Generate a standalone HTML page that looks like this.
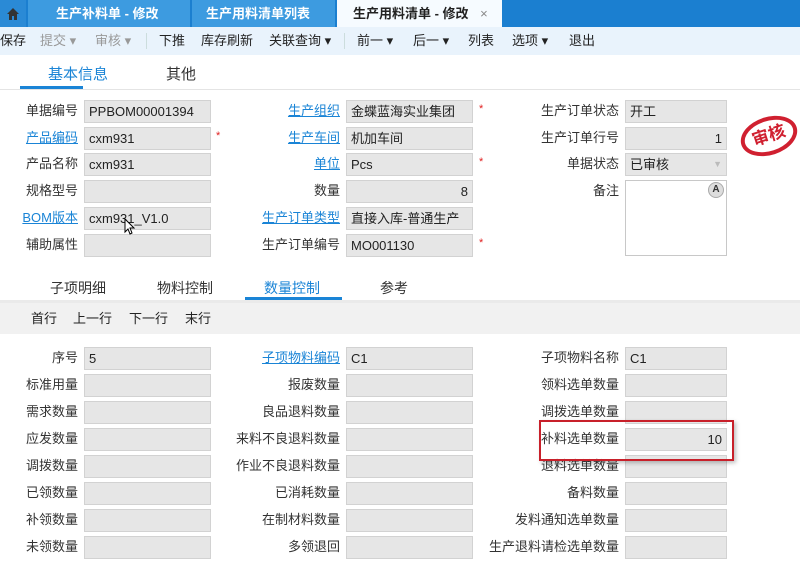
<!DOCTYPE html>
<html><head><meta charset="utf-8"><style>
*{margin:0;padding:0;box-sizing:border-box}
body{width:800px;height:566px;overflow:hidden;background:#fff;font-family:"Liberation Sans","Noto Sans CJK SC",sans-serif;font-size:13px;color:#333;position:relative}
.a{position:absolute}
.tabbar{left:0;top:0;width:800px;height:27px;background:#1b7fd0}
.tab{top:0;height:27px;color:#fff;font-size:13px;line-height:27px;font-weight:bold}
.tb{top:27px;left:0;width:800px;height:28px;background:#e9f3fc;line-height:28px;font-size:13px;color:#222}
.tb span{position:absolute;top:0}
.dis{color:#999}
.lbl{width:80px;text-align:right;font-size:13px;line-height:22px;color:#333;white-space:nowrap}
.lk{color:#1a84d6;text-decoration:underline}
.in{height:23px;background:#e6e6e6;border:1px solid #d2d2d2;font-size:13px;line-height:21px;padding:0 4px;color:#222}
.r{text-align:right}
.st{color:#e02020;font-size:11px}
</style></head><body>
<div class="a tabbar"></div>
<div class="a tab" style="left:0;width:26px;background:#2a8ad6;text-align:center">
<svg width="14" height="14" viewBox="0 0 14 14" style="margin-top:7px"><path d="M7 1L1 7h2v6h3V9h2v4h3V7h2z" fill="#333"/></svg></div>
<div class="a tab" style="left:28px;width:162px;background:#3d9be0;padding-left:28px">生产补料单 - 修改</div>
<div class="a tab" style="left:192px;width:143px;background:#3d9be0;padding-left:14px">生产用料清单列表</div>
<div class="a tab" style="left:337px;width:165px;background:#f6fbff;color:#222;padding-left:16px">生产用料清单 - 修改 <span style="color:#888;font-weight:normal;margin-left:8px">×</span></div>
<div class="a tb">
<span style="left:0">保存</span>
<span class="dis" style="left:40px">提交 ▾</span>
<span class="dis" style="left:95px">审核 ▾</span>
<span style="left:146px;top:6px;width:1px;height:16px;background:#cdd;"></span>
<span style="left:159px">下推</span>
<span style="left:201px">库存刷新</span>
<span style="left:269px">关联查询 ▾</span>
<span style="left:344px;top:6px;width:1px;height:16px;background:#cdd;"></span>
<span style="left:357px">前一 ▾</span>
<span style="left:413px">后一 ▾</span>
<span style="left:468px">列表</span>
<span style="left:512px">选项 ▾</span>
<span style="left:569px">退出</span>
</div>
<div class="a" style="left:48px;top:63px;font-size:15px;color:#1a84d6">基本信息</div>
<div class="a" style="left:166px;top:63px;font-size:15px;color:#333">其他</div>
<div class="a" style="left:20px;top:86px;width:63px;height:3px;background:#1a84d6"></div>
<div class="a" style="left:0;top:89px;width:800px;height:1px;background:#e4e4e4"></div>

<div class="a lbl" style="left:-2px;top:100px">单据编号</div><div class="a in" style="left:84px;top:100px;width:127px">PPBOM00001394</div>
<div class="a lbl lk" style="left:-2px;top:127px">产品编码</div><div class="a in" style="left:84px;top:127px;width:127px">cxm931</div><div class="a st" style="left:216px;top:130px">*</div>
<div class="a lbl" style="left:-2px;top:153px">产品名称</div><div class="a in" style="left:84px;top:153px;width:127px">cxm931</div>
<div class="a lbl" style="left:-2px;top:180px">规格型号</div><div class="a in" style="left:84px;top:180px;width:127px"></div>
<div class="a lbl lk" style="left:-2px;top:207px">BOM版本</div><div class="a in" style="left:84px;top:207px;width:127px">cxm931_V1.0</div>
<div class="a lbl" style="left:-2px;top:234px">辅助属性</div><div class="a in" style="left:84px;top:234px;width:127px"></div>
<svg class="a" style="left:124px;top:218px" width="14" height="18" viewBox="0 0 14 18"><path d="M1 1v13l3-3 2 5 2-1-2-5h4z" fill="#fff" stroke="#000"/></svg>

<div class="a lbl lk" style="left:260px;top:100px">生产组织</div><div class="a in" style="left:346px;top:100px;width:127px">金蝶蓝海实业集团</div><div class="a st" style="left:479px;top:103px">*</div>
<div class="a lbl lk" style="left:260px;top:127px">生产车间</div><div class="a in" style="left:346px;top:127px;width:127px">机加车间</div>
<div class="a lbl lk" style="left:260px;top:153px">单位</div><div class="a in" style="left:346px;top:153px;width:127px">Pcs</div><div class="a st" style="left:479px;top:156px">*</div>
<div class="a lbl" style="left:260px;top:180px">数量</div><div class="a in r" style="left:346px;top:180px;width:127px">8</div>
<div class="a lbl lk" style="left:240px;top:207px;width:100px">生产订单类型</div><div class="a in" style="left:346px;top:207px;width:127px">直接入库-普通生产</div>
<div class="a lbl" style="left:240px;top:234px;width:100px">生产订单编号</div><div class="a in" style="left:346px;top:234px;width:127px">MO001130</div><div class="a st" style="left:479px;top:237px">*</div>

<div class="a lbl" style="left:519px;top:100px;width:100px">生产订单状态</div><div class="a in" style="left:625px;top:100px;width:102px">开工</div>
<div class="a lbl" style="left:519px;top:127px;width:100px">生产订单行号</div><div class="a in r" style="left:625px;top:127px;width:102px">1</div>
<div class="a lbl" style="left:519px;top:153px;width:100px">单据状态</div><div class="a in" style="left:625px;top:153px;width:102px">已审核<span style="float:right;color:#bbb;font-size:9px">▼</span></div>
<div class="a lbl" style="left:519px;top:180px;width:100px">备注</div>
<div class="a" style="left:625px;top:180px;width:102px;height:76px;border:1px solid #c8c8c8;background:#fff"></div>
<div class="a" style="left:708px;top:182px;width:16px;height:16px;border-radius:8px;background:#ddd;border:1px solid #aaa;font-size:10px;text-align:center;line-height:14px;font-weight:bold">A</div>
<div class="a" style="left:740px;top:117px;width:58px;height:38px;border:4px solid #d02030;border-radius:50%;transform:rotate(-18deg);color:#d02030;font-weight:bold;font-size:17px;text-align:center;line-height:30px">审核</div>

<div class="a" style="left:50px;top:278px;font-size:14px">子项明细</div>
<div class="a" style="left:157px;top:278px;font-size:14px">物料控制</div>
<div class="a" style="left:264px;top:278px;font-size:14px;color:#1a84d6">数量控制</div>
<div class="a" style="left:380px;top:278px;font-size:14px">参考</div>
<div class="a" style="left:245px;top:297px;width:97px;height:3px;background:#1a84d6"></div>
<div class="a" style="left:0;top:300px;width:800px;height:3px;background:#eaeaea"></div>
<div class="a" style="left:0;top:303px;width:800px;height:31px;background:#f1f1f1;line-height:31px;font-size:13px;color:#222">
<span class="a" style="left:31px">首行</span><span class="a" style="left:73px">上一行</span><span class="a" style="left:129px">下一行</span><span class="a" style="left:185px">末行</span></div>

<div class="a lbl" style="left:-2px;top:347px">序号</div><div class="a in" style="left:84px;top:347px;width:127px">5</div>
<div class="a lbl" style="left:-2px;top:374px">标准用量</div><div class="a in" style="left:84px;top:374px;width:127px"></div>
<div class="a lbl" style="left:-2px;top:401px">需求数量</div><div class="a in" style="left:84px;top:401px;width:127px"></div>
<div class="a lbl" style="left:-2px;top:428px">应发数量</div><div class="a in" style="left:84px;top:428px;width:127px"></div>
<div class="a lbl" style="left:-2px;top:455px">调拨数量</div><div class="a in" style="left:84px;top:455px;width:127px"></div>
<div class="a lbl" style="left:-2px;top:482px">已领数量</div><div class="a in" style="left:84px;top:482px;width:127px"></div>
<div class="a lbl" style="left:-2px;top:509px">补领数量</div><div class="a in" style="left:84px;top:509px;width:127px"></div>
<div class="a lbl" style="left:-2px;top:536px">未领数量</div><div class="a in" style="left:84px;top:536px;width:127px"></div>

<div class="a lbl lk" style="left:220px;top:347px;width:120px">子项物料编码</div><div class="a in" style="left:346px;top:347px;width:127px">C1</div>
<div class="a lbl" style="left:220px;top:374px;width:120px">报废数量</div><div class="a in" style="left:346px;top:374px;width:127px"></div>
<div class="a lbl" style="left:220px;top:401px;width:120px">良品退料数量</div><div class="a in" style="left:346px;top:401px;width:127px"></div>
<div class="a lbl" style="left:220px;top:428px;width:120px">来料不良退料数量</div><div class="a in" style="left:346px;top:428px;width:127px"></div>
<div class="a lbl" style="left:220px;top:455px;width:120px">作业不良退料数量</div><div class="a in" style="left:346px;top:455px;width:127px"></div>
<div class="a lbl" style="left:220px;top:482px;width:120px">已消耗数量</div><div class="a in" style="left:346px;top:482px;width:127px"></div>
<div class="a lbl" style="left:220px;top:509px;width:120px">在制材料数量</div><div class="a in" style="left:346px;top:509px;width:127px"></div>
<div class="a lbl" style="left:220px;top:536px;width:120px">多领退回</div><div class="a in" style="left:346px;top:536px;width:127px"></div>

<div class="a lbl" style="left:479px;top:347px;width:140px">子项物料名称</div><div class="a in" style="left:625px;top:347px;width:102px">C1</div>
<div class="a lbl" style="left:479px;top:374px;width:140px">领料选单数量</div><div class="a in" style="left:625px;top:374px;width:102px"></div>
<div class="a lbl" style="left:479px;top:401px;width:140px">调拨选单数量</div><div class="a in" style="left:625px;top:401px;width:102px"></div>
<div class="a lbl" style="left:479px;top:428px;width:140px">补料选单数量</div><div class="a in r" style="left:625px;top:428px;width:102px">10</div>
<div class="a lbl" style="left:479px;top:455px;width:140px">退料选单数量</div><div class="a in" style="left:625px;top:455px;width:102px"></div>
<div class="a lbl" style="left:479px;top:482px;width:140px">备料数量</div><div class="a in" style="left:625px;top:482px;width:102px"></div>
<div class="a lbl" style="left:479px;top:509px;width:140px">发料通知选单数量</div><div class="a in" style="left:625px;top:509px;width:102px"></div>
<div class="a lbl" style="left:479px;top:536px;width:140px">生产退料请检选单数量</div><div class="a in" style="left:625px;top:536px;width:102px"></div>
<div class="a" style="left:539px;top:420px;width:195px;height:41px;border:2px solid #c8202a;box-shadow:2px 2px 4px rgba(0,0,0,.25)"></div>
</body></html>
